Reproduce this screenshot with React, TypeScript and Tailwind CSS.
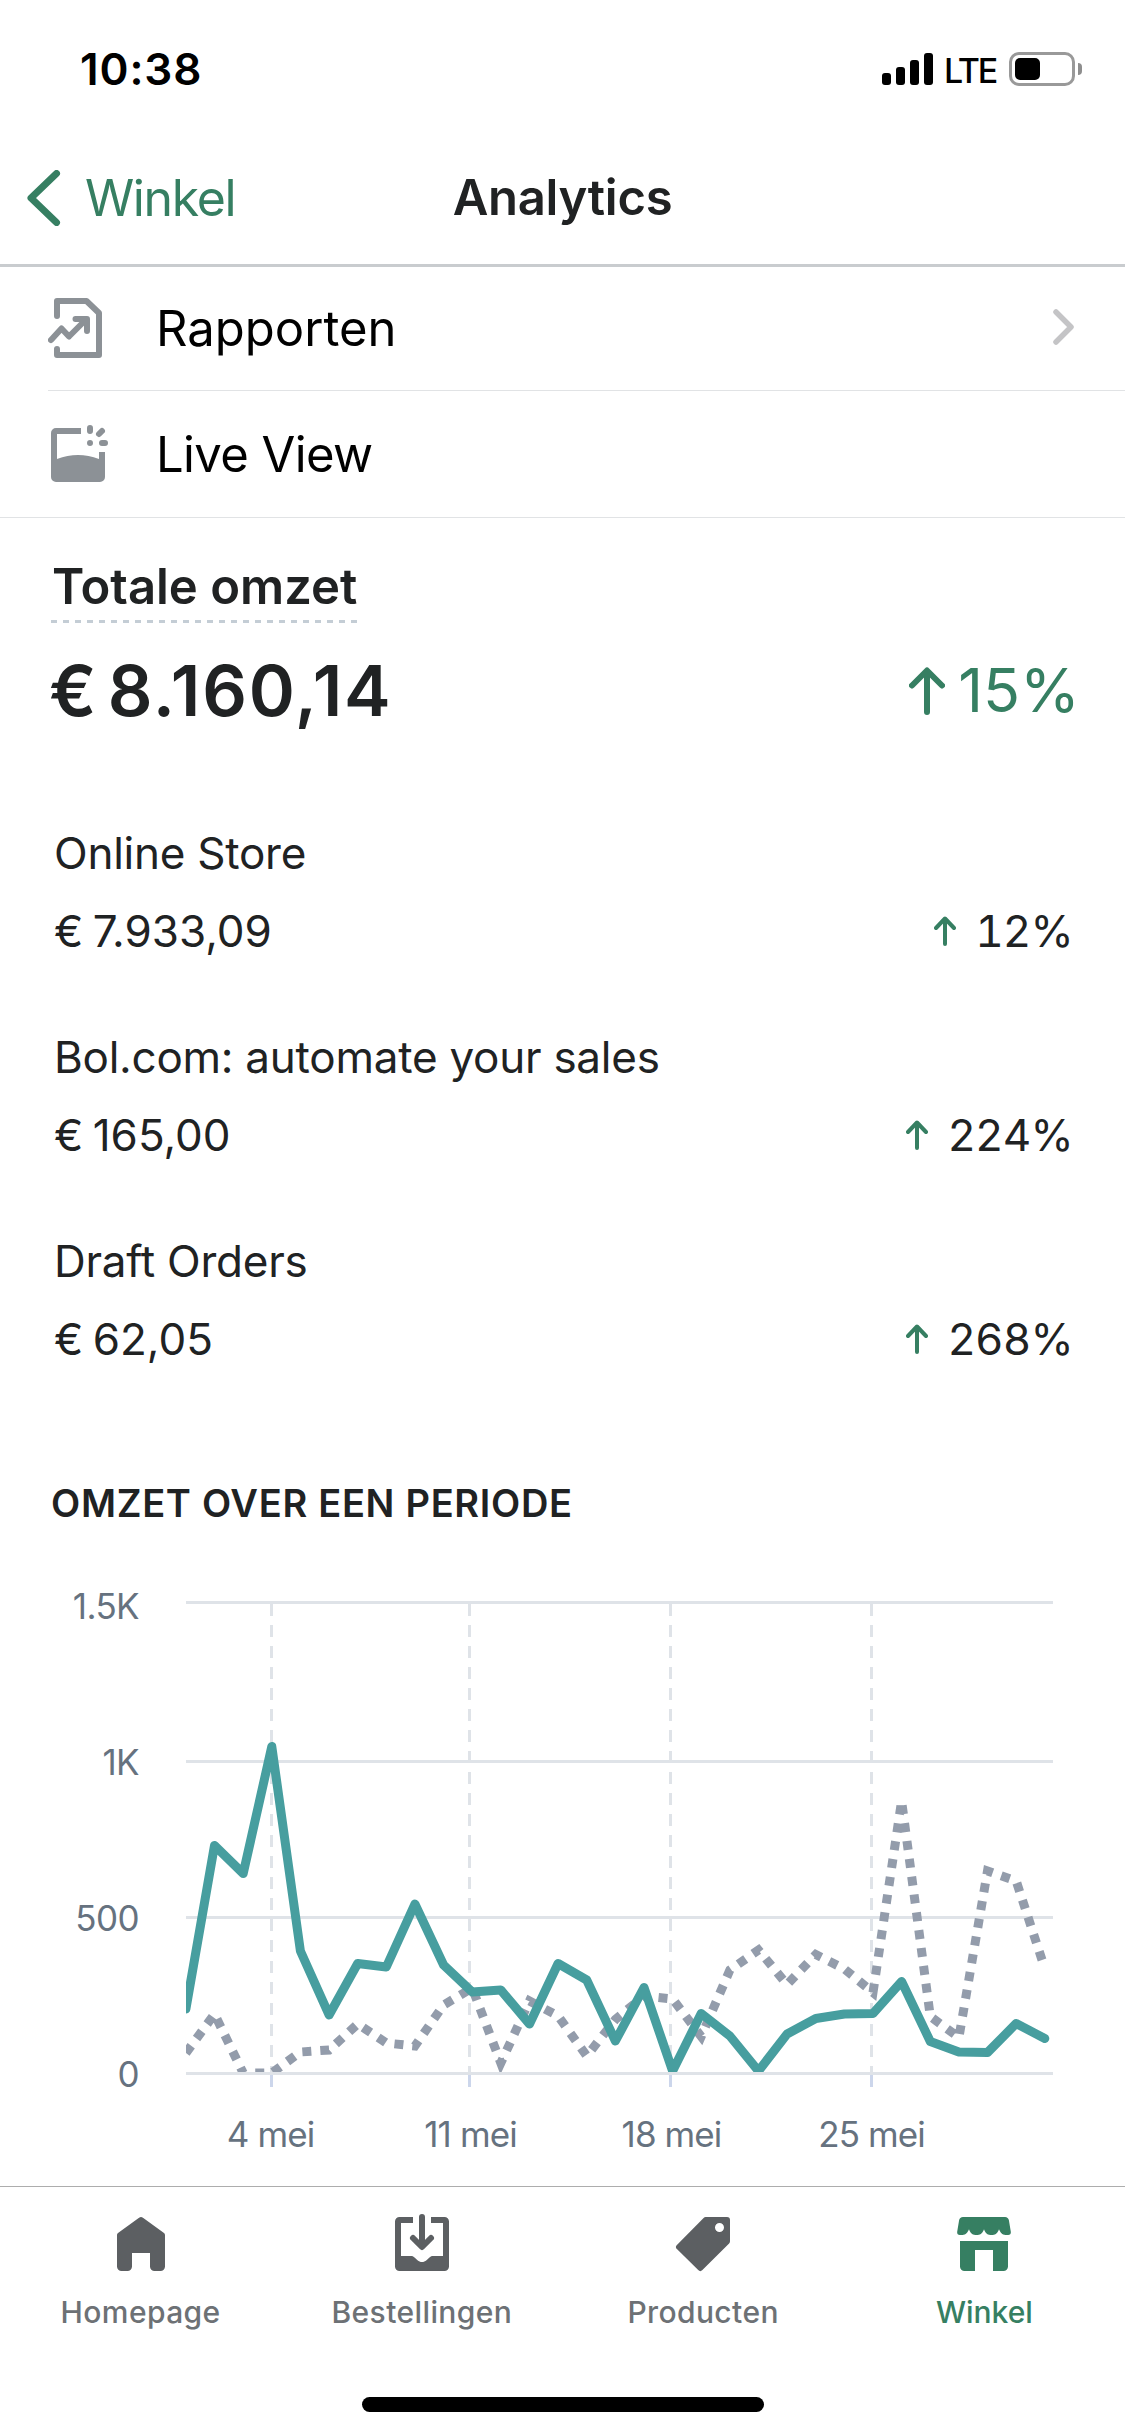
import * as React from "react";

const channels = [
    {name: "Online Store", amount: "€ 7.933,09", change: "12%"},
    {name: "Bol.com: automate your sales", amount: "€ 165,00", change: "224%"},
    {name: "Draft Orders", amount: "€ 62,05", change: "268%"},
];

// heights above the zero line, one per day
const current = [
    64, 227.5, 199.5, 326.5, 122, 58, 109.5, 106, 169, 108, 81, 83, 49, 109.5, 93, 32,
    85.5, 2, 59.5, 37, 2, 39, 54.5, 59, 59.5, 91.5, 31.5, 21, 20.5, 49.5, 34.5,
];
const previous = [
    20, 59, 0, 0, 21, 23, 49, 30, 27, 68, 85, 10, 72, 57, 17, 53.5,
    77, 74, 36.5, 103, 123, 88.5, 118.5, 104, 80.5, 272, 56.5, 35.5, 202, 192, 104.5,
];

const AXIS_Y = 545;
const toPoints = (values: number[]) =>
    values.map((v, i) => `${(185.9 + i * 28.63).toFixed(1)},${AXIS_Y - v}`).join(" ");

const yTicks = [
    {label: "1.5K", y: 74.5, textY: 91},
    {label: "1K", y: 233.5, textY: 247},
    {label: "500", y: 389.5, textY: 403},
    {label: "0", y: 545.5, textY: 559},
];
const xTicks = [
    {label: "4 mei", x: 271.5, textX: 270.5},
    {label: "11 mei", x: 469.5, textX: 470.5},
    {label: "18 mei", x: 670.5, textX: 671.5},
    {label: "25 mei", x: 871.5, textX: 871.5},
];

const StatusBar = () => (
    <div className="flex h-[138px] items-center pl-[80px] pr-[43px] text-black">
        <span className="text-[44px] font-semibold tracking-[0.9px]">10:38</span>
        <div className="ml-auto flex items-center">
            <div className="flex h-8 items-end gap-[5px]">
                <div className="h-3 w-[9px] rounded-[3px] bg-black"/>
                <div className="h-[18px] w-[9px] rounded-[3px] bg-black"/>
                <div className="h-[25px] w-[9px] rounded-[3px] bg-black"/>
                <div className="h-8 w-[9px] rounded-[3px] bg-black"/>
            </div>
            <span className="ml-[11px] mt-[3px] w-[65px] text-[34px] font-medium leading-none tracking-[-2.2px]">LTE</span>
            <div className="flex h-[34px] w-[66px] items-center rounded-[10px] border-3 border-[#999] pl-[3px]">
                <div className="h-[22px] w-[25px] rounded-[5px] bg-black"/>
            </div>
            <div className="ml-[3px] h-3 w-1 rounded-r-full bg-[#8e8e8e]"/>
        </div>
    </div>
);

const Header = () => (
    <div className="grid h-[129px] grid-cols-3 items-center border-b-3 border-[#c9cccf] pb-[6px]">
        <div className="flex items-center pl-[27px] text-[#367f62]">
            <svg width="34" height="56" viewBox="0 0 34 56" fill="none" stroke="currentColor" strokeWidth="7" strokeLinecap="round" strokeLinejoin="round">
                <path d="M29.5 3.5 4 28l25.500 24.500"/>
            </svg>
            <span className="ml-[24px] text-[50px] tracking-[-1.4px]">Winkel</span>
        </div>
        <h1 className="text-center text-[49px] font-semibold tracking-[-0.3px] text-[#202223]">Analytics</h1>
    </div>
);

const ReportIcon = () => (
    <svg className="-mt-[2px]" width="54" height="60" viewBox="0 0 54 60" fill="none" stroke="#8c9196" strokeWidth="6" strokeLinecap="round" strokeLinejoin="round">
        <path d="M9 18V3H38.500L51 15V57H9V51"/>
        <path d="M3 42 13.500 30.500 21 38.500 38 21.500M27.500 21H39V33"/>
    </svg>
);

const LiveIcon = () => (
    <svg className="-mt-[2px]" width="57" height="57" viewBox="0 0 57 57" fill="#8c9196">
        <path d="M5 3H30V9H6V34Q27 26 48 34V27H54V52a5 5 0 0 1-5 5H5a5 5 0 0 1-5-5V8a5 5 0 0 1 5-5z"/>
        <path d="M39 3v3M51 6l-3 3M39 18v.01M51 18h3" stroke="#8c9196" strokeWidth="6" strokeLinecap="round"/>
    </svg>
);

const Arrow = ({small}: {small?: boolean}) => small ? (
    <svg width="22" height="30" viewBox="0 0 22 30" fill="none" stroke="#367f62" strokeWidth="4" strokeLinecap="round" strokeLinejoin="round">
        <path d="M11 28V3M2 12l9-9.500 9 9.500"/>
    </svg>
) : (
    <svg width="36" height="48" viewBox="0 0 36 48" fill="none" stroke="#367f62" strokeWidth="6" strokeLinecap="round" strokeLinejoin="round">
        <path d="M18 45V4M3 18.500 18 3.500l15 15"/>
    </svg>
);

const RevenueChart = () => (
    <svg className="block" width="1125" height="658" viewBox="0 0 1125 658">
        <defs>
            <clipPath id="plot">
                <rect x="186" y="70" width="867" height="474"/>
            </clipPath>
        </defs>
        {xTicks.map((t) => (
            <g key={t.label}>
                <path d={`M${t.x} 76V544`} stroke="#dfe3e8" strokeWidth="3" strokeDasharray="12 9"/>
                <path d={`M${t.x} 547V559`} stroke="#ccd6eb" strokeWidth="3"/>
                <text x={t.textX} y="619" textAnchor="middle" className="fill-[#66727f] text-[35px] tracking-[-0.9px]">{t.label}</text>
            </g>
        ))}
        {yTicks.map((t) => (
            <g key={t.label}>
                <path d={`M186 ${t.y}H1053`} stroke="#dfe3e8" strokeWidth="3"/>
                <text x="139" y={t.textY} textAnchor="end" className="fill-[#66727f] text-[35px] tracking-[-0.6px]">{t.label}</text>
            </g>
        ))}
        <g clipPath="url(#plot)" fill="none" strokeWidth="9">
            <polyline points={toPoints(previous)} stroke="#939cab" strokeDasharray="9 9"/>
            <polyline points={toPoints(current)} stroke="#479e9f" strokeLinecap="round" strokeLinejoin="round"/>
        </g>
    </svg>
);

const HomeIcon = () => (
    <svg width="60" height="60" viewBox="0 0 20 20" fill="#5c5f62">
        <path d="M9.350 1.250a1 1 0 0 1 1.300 0l6.900 5c.300.200.450.500.450.850V17.500a1.500 1.500 0 0 1-1.500 1.500h-2a1.500 1.500 0 0 1-1.500-1.500V13H7v4.500A1.500 1.500 0 0 1 5.500 19h-2A1.500 1.500 0 0 1 2 17.500V7.100c0-.350.150-.650.450-.850z"/>
    </svg>
);

const OrdersIcon = () => (
    <svg width="60" height="60" viewBox="0 0 20 20" fill="#5c5f62">
        <path d="M2.500 1H7v2H3v11h3.300c.600 0 .900.200 1.300.600l.900.800c.900.800 2.100.800 3 0l.900-.800c.400-.400.700-.600 1.300-.600H17V3h-4V1h4.500A1.500 1.500 0 0 1 19 2.500v15a1.500 1.500 0 0 1-1.500 1.500h-15A1.500 1.500 0 0 1 1 17.500v-15A1.500 1.500 0 0 1 2.500 1z"/>
        <path d="M10 1v9.500M7 8l3 3 3-3" fill="none" stroke="#5c5f62" strokeWidth="2" strokeLinecap="round" strokeLinejoin="round"/>
    </svg>
);

const TagIcon = () => (
    <svg width="60" height="60" viewBox="0 0 20 20" fill="#5c5f62" fillRule="evenodd">
        <path d="M10.900 1H18a1 1 0 0 1 1 1v7.100a1 1 0 0 1-.300.700l-8.900 8.900a1 1 0 0 1-1.400 0l-7.100-7a1 1 0 0 1 0-1.400l8.900-9a1 1 0 0 1 .700-.300zM15.500 6a1.500 1.500 0 1 0 0-3 1.500 1.500 0 0 0 0 3z"/>
    </svg>
);

const StoreIcon = () => (
    <svg width="60" height="60" viewBox="0 0 20 20" fill="#367f62">
        <path d="M3 1h14c.700 0 1.200.500 1.300 1.100L18.950 6c.050.600-.300 1-.900 1h-.850c-1.200 0-1.700-.800-2.200-1.900-.400 1.100-1 1.900-2.100 1.900h-.800C11 7 10.400 6.200 10 5.100 9.600 6.200 9 7 7.900 7h-.800C6 7 5.400 6.200 5 5.100 4.500 6.200 4 7 2.800 7h-.850c-.600 0-.950-.400-.900-1l.650-3.900C1.800 1.500 2.300 1 3 1z"/>
        <path d="M2 9h16v8.500a1.500 1.500 0 0 1-1.500 1.500H13v-7H7v7H3.500A1.500 1.500 0 0 1 2 17.500z"/>
    </svg>
);

const tabs = [
    {label: "Homepage", icon: <HomeIcon/>, active: false},
    {label: "Bestellingen", icon: <OrdersIcon/>, active: false},
    {label: "Producten", icon: <TagIcon/>, active: false},
    {label: "Winkel", icon: <StoreIcon/>, active: true},
];

export default function App() {
    return (
        <div className="flex h-[2436px] w-[1125px] flex-col overflow-hidden bg-white font-['Inter',sans-serif] text-[#202223]">
            <StatusBar/>
            <Header/>

            <div className="border-b border-[#e1e3e5] pl-12 text-[49px] text-black">
                <div className="flex h-[124px] items-center border-b border-[#e1e3e5] pr-[51px]">
                    <ReportIcon/>
                    <span className="ml-[54px]">Rapporten</span>
                    <svg className="-mt-[3px] ml-auto" width="21" height="36" viewBox="0 0 21 36" fill="none" stroke="#c4c4c6" strokeWidth="5.5" strokeLinecap="round" strokeLinejoin="round">
                        <path d="M3 3 18 18 3 33"/>
                    </svg>
                </div>
                <div className="flex h-[126px] items-center pl-[3px]">
                    <LiveIcon/>
                    <span className="ml-[48px] pt-[2px] tracking-[-0.6px]">Live View</span>
                </div>
            </div>

            <div className="pl-[51px] pr-[45px] pt-11">
                <h2 className="pl-px text-[49px] font-semibold leading-[50px]">Totale omzet</h2>
                <div className="mt-2 h-[3px] w-[307px] bg-[repeating-linear-gradient(90deg,#c4cdd5_0_6px,transparent_6px_12px)]"/>
                <div className="flex h-[135px] items-center justify-between">
                    <span className="-ml-[2px] text-[70px] font-semibold tracking-[1.8px] [word-spacing:-10px]">€ 8.160,14</span>
                    <div className="flex items-center gap-[13px] text-[61px] text-[#367f62]">
                        <Arrow/>
                        15%
                    </div>
                </div>
            </div>

            <div className="mt-14 flex flex-col gap-12 pl-[54px] pr-[52px] text-[44px] leading-[78px] tracking-[-0.25px]">
                {channels.map((c) => (
                    <div key={c.name}>
                        <div>{c.name}</div>
                        <div className="flex items-center justify-between">
                            <span className="tracking-normal [word-spacing:-3px]">{c.amount}</span>
                            <div className="flex items-center gap-[19px] tracking-[-0.8px] tabular-nums">
                                <Arrow small/>
                                {c.change}
                            </div>
                        </div>
                    </div>
                ))}
            </div>

            <h3 className="mt-[100px] pl-[51px] text-[38px] font-semibold leading-[50px] tracking-[0.7px]">OMZET OVER EEN PERIODE</h3>
            <RevenueChart/>

            <div className="grid grid-cols-4 border-t border-[#adadad] pt-[27px]">
                {tabs.map((t) => (
                    <div key={t.label} className="flex flex-col items-center">
                        {t.icon}
                        <span className={`mt-[18px] text-[30px] font-medium leading-[40px] ${t.active ? "text-[#367f62]" : "tracking-[0.4px] text-[#6d7175]"}`}>
                            {t.label}
                        </span>
                    </div>
                ))}
            </div>
            <div className="mx-auto mt-[65px] h-[15px] w-[402px] rounded-full bg-black"/>
        </div>
    );
}
